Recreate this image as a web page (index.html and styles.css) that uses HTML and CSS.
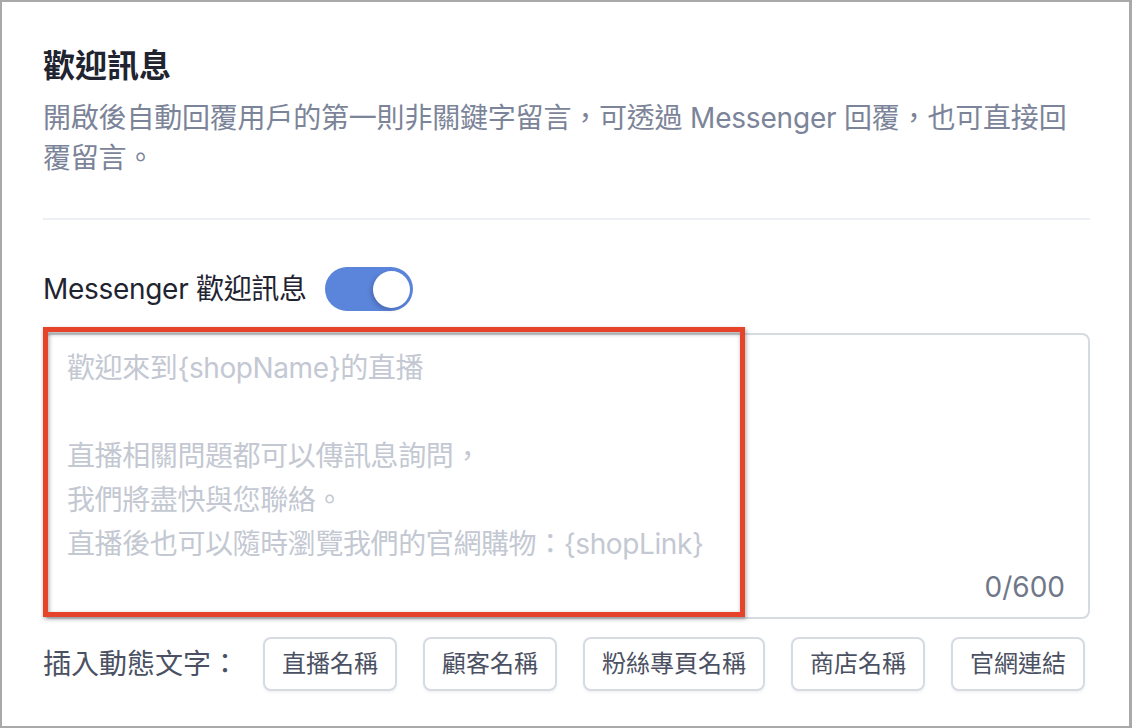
FILE: index.html
```html
<!DOCTYPE html>
<html lang="zh-Hant">
<head>
<meta charset="utf-8">
<title>歡迎訊息</title>
<link rel="stylesheet" href="styles.css">
</head>
<body>
<div class="frame">
  <section class="panel">
    <h1 class="title">歡迎訊息</h1>
    <p class="desc">開啟後自動回覆用戶的第一則非關鍵字留言，可透過 Messenger 回覆，也可直接回覆留言。</p>
    <hr class="divider">
    <div class="toggle-row">
      <span class="toggle-label">Messenger 歡迎訊息</span>
      <span class="switch"><span class="knob"></span></span>
    </div>
    <div class="editor">
      <div class="textarea">
        <div class="placeholder">
          <div class="line">歡迎來到{shopName}的直播</div>
          <div class="line">&nbsp;</div>
          <div class="line">直播相關問題都可以傳訊息詢問，</div>
          <div class="line">我們將盡快與您聯絡。</div>
          <div class="line">直播後也可以隨時瀏覽我們的官網購物：{shopLink}</div>
        </div>
        <div class="counter">0/600</div>
      </div>
      <div class="highlight"></div>
    </div>
    <div class="insert-row">
      <span class="insert-label">插入動態文字：</span>
      <button class="chip">直播名稱</button>
      <button class="chip">顧客名稱</button>
      <button class="chip">粉絲專頁名稱</button>
      <button class="chip">商店名稱</button>
      <button class="chip">官網連結</button>
    </div>
  </section>
</div>
</body>
</html>
```

FILE: styles.css
```css
* { box-sizing: border-box; }
html, body { margin: 0; padding: 0; background: #ffffff; }
body {
  font-family: "Inter", "Noto Sans CJK TC", sans-serif;
  width: 1132px;
  height: 728px;
  overflow: hidden;
}
.frame {
  width: 1132px;
  height: 728px;
  border-top: 2px solid #a9a9a9;
  border-left: 2px solid #a9a9a9;
  border-right: 3px solid #a9a9a9;
  border-bottom: 2px solid #a9a9a9;
  background: #fff;
}
.panel {
  padding: 42px 39px 0 41px;
  display: flex;
  flex-direction: column;
}
.title {
  margin: 0;
  font-size: 32px;
  line-height: 44px;
  font-weight: 700;
  color: #1f2430;
}
.desc {
  margin: 10px 0 0 0;
  font-size: 28px;
  line-height: 40px;
  font-weight: 400;
  color: #7b8498;
  letter-spacing: -0.2px;
}
.divider {
  margin: 40px 0 0 0;
  border: 0;
  height: 2px;
  background: #eceff4;
}
.toggle-row {
  margin-top: 47px;
  display: flex;
  align-items: center;
  gap: 18px;
  height: 44px;
}
.toggle-label {
  font-size: 28px;
  line-height: 40px;
  color: #1f2430;
  letter-spacing: -0.3px;
}
.switch {
  width: 88px;
  height: 44px;
  border-radius: 22px;
  background: #5b84db;
  display: flex;
  align-items: center;
  justify-content: flex-end;
  padding-right: 3px;
}
.knob {
  width: 37px;
  height: 37px;
  border-radius: 50%;
  background: #ffffff;
  box-shadow: -2px 2px 4px rgba(0, 0, 0, 0.18);
}
.editor {
  position: relative;
  margin-top: 22px;
}
.textarea {
  height: 286px;
  border: 2px solid #d6dbe1;
  border-radius: 8px;
  padding: 11px 23px 10px 22px;
  display: flex;
  flex-direction: column;
  justify-content: space-between;
}
.placeholder {
  font-size: 28px;
  line-height: 44px;
  color: #c3c8d2;
  letter-spacing: -0.4px;
}
.line { white-space: nowrap; }
.counter {
  align-self: flex-end;
  font-size: 28px;
  line-height: 40px;
  color: #6f7788;
}
.highlight {
  position: absolute;
  left: 0;
  top: -6px;
  width: 702px;
  height: 290px;
  border: 5px solid #e6432b;
  filter: drop-shadow(1px 2px 2px rgba(0, 0, 0, 0.35));
  pointer-events: none;
}
.insert-row {
  margin-top: 18px;
  display: flex;
  align-items: center;
  gap: 26px;
}
.insert-label {
  font-size: 28px;
  line-height: 40px;
  color: #4b5163;
  margin-right: -2px;
  width: 196px;
  white-space: nowrap;
}
.chip {
  height: 54px;
  padding: 0 17px;
  border: 2px solid #d6dbe1;
  border-radius: 8px;
  background: #ffffff;
  font-family: "Inter", "Noto Sans CJK TC", sans-serif;
  font-size: 24px;
  line-height: 30px;
  color: #4b5163;
  box-shadow: 0 2px 3px rgba(0, 0, 0, 0.05);
  display: inline-flex;
  align-items: center;
}
```
